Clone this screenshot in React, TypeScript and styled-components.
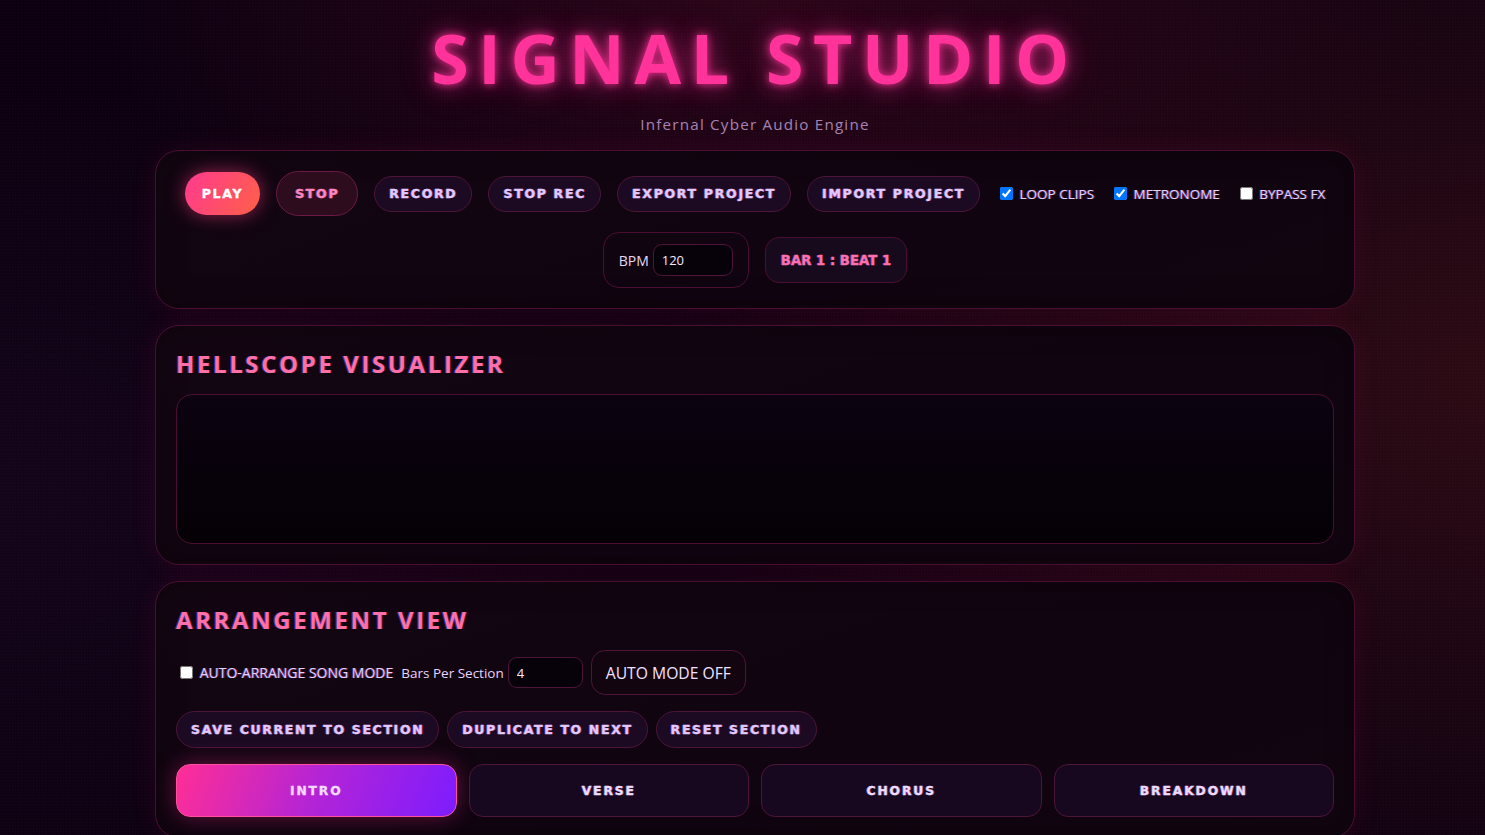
import React from "react";
import styled, { createGlobalStyle, css } from "styled-components";

const GlobalStyle = createGlobalStyle`
  html, body {
    margin: 0;
    padding: 0;
  }
  body {
    min-height: 100vh;
    background-color: #0c0010;
    background-image:
      repeating-linear-gradient(0deg, rgba(255,255,255,0.006) 0 1px, transparent 1px 3px),
      repeating-linear-gradient(90deg, rgba(255,255,255,0.006) 0 1px, transparent 1px 3px),
      radial-gradient(ellipse 45% 40% at 52% 0%, #2c0519 0%, rgba(44,5,25,0) 100%),
      radial-gradient(ellipse 55% 70% at 100% 45%, #2c0a14 0%, rgba(44,10,20,0) 100%),
      radial-gradient(ellipse 40% 50% at 0% 60%, #14041a 0%, rgba(20,4,26,0) 100%);
    background-attachment: fixed;
    font-family: "Open Sans", "Noto Sans", sans-serif;
    color: #e8d6f5;
  }
`;

const Page = styled.div`
  padding: 0 0 40px 25px;
`;

const Shell = styled.div`
  max-width: 1200px;
  margin: 0 auto;
  display: flex;
  flex-direction: column;
  gap: 16px;
`;

const Header = styled.header`
  text-align: center;
  padding-top: 20px;
`;

const Title = styled.h1`
  margin: 0;
  font-family: "Open Sans", sans-serif;
  font-weight: 700;
  font-size: 68px;
  line-height: 76px;
  letter-spacing: 9.6px;
  color: #ff3399;
  text-shadow: 0 0 8px rgba(255, 51, 153, 0.9), 0 0 22px rgba(255, 51, 153, 0.55),
    0 0 40px rgba(255, 51, 153, 0.3);
`;

const Subtitle = styled.p`
  margin: 18px 0 0;
  font-size: 15.2px;
  letter-spacing: 1.2px;
  color: #a683b3;
`;

const Panel = styled.section`
  border: 1px solid #4a0f30;
  border-radius: 24px;
  background: linear-gradient(160deg, #130612 0%, #0f040f 60%, #110510 100%);
  box-shadow: 0 0 28px rgba(255, 30, 110, 0.09), inset 0 0 30px rgba(0, 0, 0, 0.25);
  padding: 20px;
`;

const ToolbarPanel = styled(Panel)`
  padding: 20px 25px 20px;
`;

const Toolbar = styled.div`
  display: flex;
  flex-wrap: wrap;
  justify-content: center;
  align-items: center;
  gap: 16px;
`;

const heavy = css`
  font-family: "DejaVu Sans", "Liberation Sans", sans-serif;
  font-weight: 700;
  text-transform: uppercase;
  -webkit-text-stroke: 0.35px currentColor;
`;

const chroma = css`
  text-shadow: -1px 0 rgba(80, 110, 255, 0.55), 1px 0 rgba(255, 60, 120, 0.45);
`;

type Tone = "play" | "stop" | "plain";

const PillButton = styled.button<{ $tone?: Tone }>`
  ${heavy}
  font-size: 12.5px;
  letter-spacing: 1.7px;
  border-radius: 999px;
  cursor: pointer;
  padding: 0 14px;
  height: 36px;
  border: 1px solid #4d1538;
  background: #1b0a22;
  color: #e3c9ff;
  ${chroma}
  ${(p) =>
    p.$tone === "play" &&
    css`
      height: 43px;
      padding: 0 17px;
      border: none;
      color: #fff;
      background: linear-gradient(120deg, #ff3a8f 0%, #ff6048 100%);
      box-shadow: 0 0 18px rgba(255, 60, 130, 0.55);
      text-shadow: none;
    `}
  ${(p) =>
    p.$tone === "stop" &&
    css`
      height: 45px;
      padding: 0 18px;
      background: #2c0c1d;
      border-color: #6a1a43;
      color: #ff86bd;
    `}
`;

const Check = styled.label<{ $size?: number }>`
  font-size: ${(p) => p.$size ?? 13.5}px;
  color: #e8d4ff;
  display: inline-flex;
  align-items: center;
  white-space: pre;
  text-transform: uppercase;
  ${chroma}
  input {
    margin: 3px 3px 3px 4px;
  }
`;

const BpmBox = styled.div`
  display: flex;
  align-items: center;
  gap: 4px;
  padding: 11px 15px;
  border: 1px solid #4a0f30;
  border-radius: 16px;
  font-size: 14px;
  color: #e8d8f5;
`;

const NumInput = styled.input<{ $w: number; $h?: number }>`
  width: ${(p) => p.$w}px;
  height: ${(p) => p.$h ?? 32}px;
  box-sizing: border-box;
  padding: 0 8px;
  border: 1px solid #4d1538;
  border-radius: 9px;
  background: #07020a;
  color: #f4e8ff;
  font-family: "Open Sans", sans-serif;
  font-size: 13px;
  outline: none;
`;

const Readout = styled.div`
  ${heavy}
  font-size: 13.3px;
  letter-spacing: 0px;
  color: #ff70ad;
  padding: 0 15px;
  height: 44px;
  display: flex;
  align-items: center;
  border: 1px solid #4a0f30;
  border-radius: 14px;
  background: #180a1d;
  text-shadow: -1px 0 rgba(80, 110, 255, 0.5);
`;

const SectionTitle = styled.h2`
  margin: 0 0 12px;
  font-family: "Open Sans", sans-serif;
  font-weight: 700;
  font-size: 24px;
  line-height: 36px;
  letter-spacing: 2.6px;
  color: #ff6fa8;
  text-shadow: -1px 0 rgba(70, 90, 255, 0.6), 1px 0 rgba(255, 40, 120, 0.3);
`;

const Scope = styled.div`
  height: 148px;
  border: 1px solid #4a0f30;
  border-radius: 16px;
  background: linear-gradient(180deg, #0b0310 0%, #050006 100%);
`;

const Row = styled.div<{ $gap: number }>`
  display: flex;
  flex-wrap: wrap;
  align-items: center;
  gap: ${(p) => p.$gap}px;
  margin-bottom: 16px;
`;

const PlainLabel = styled.label`
  display: inline-flex;
  align-items: center;
  gap: 4px;
  font-size: 13.5px;
  color: #e8d4ff;
`;

const GhostButton = styled.button`
  font-family: "Open Sans", sans-serif;
  font-size: 15.7px;
  color: #f0e2ff;
  background: #12050f;
  border: 1px solid #4d1538;
  border-radius: 14px;
  height: 45px;
  padding: 0 14px;
  cursor: pointer;
`;

const ActionButton = styled(PillButton)`
  height: 37px;
  font-size: 12.5px;
  letter-spacing: 1.65px;
`;

const Tabs = styled.div`
  display: grid;
  grid-template-columns: repeat(4, 1fr);
  gap: 12px;
`;

const Tab = styled.button<{ $active?: boolean }>`
  ${heavy}
  font-size: 12.3px;
  letter-spacing: 1.9px;
  height: 53px;
  border-radius: 14px;
  border: 1px solid #4d1538;
  background: #170820;
  color: #eedcff;
  cursor: pointer;
  ${chroma}
  ${(p) =>
    p.$active &&
    css`
      border-color: #ff4fa0;
      background: linear-gradient(110deg, #ff2e96 0%, #b324d6 50%, #7d1cff 100%);
      box-shadow: 0 0 22px rgba(255, 46, 150, 0.35);
      color: #f3dcff;
      text-shadow: none;
    `}
`;

export default function App() {
  return (
    <>
      <GlobalStyle />
      <Page>
        <Shell>
          <Header>
            <Title>SIGNAL STUDIO</Title>
            <Subtitle>Infernal Cyber Audio Engine</Subtitle>
          </Header>

          <ToolbarPanel>
            <Toolbar>
              <PillButton $tone="play">Play</PillButton>
              <PillButton $tone="stop">Stop</PillButton>
              <PillButton>Record</PillButton>
              <PillButton>Stop Rec</PillButton>
              <PillButton>Export Project</PillButton>
              <PillButton>Import Project</PillButton>
              <Check>
                <input type="checkbox" defaultChecked /> Loop Clips
              </Check>
              <Check>
                <input type="checkbox" defaultChecked /> Metronome
              </Check>
              <Check>
                <input type="checkbox" /> Bypass FX
              </Check>
              <BpmBox>
                BPM
                <NumInput $w={80} type="number" defaultValue={120} />
              </BpmBox>
              <Readout>Bar 1 : Beat 1</Readout>
            </Toolbar>
          </ToolbarPanel>

          <Panel>
            <SectionTitle>HELLSCOPE VISUALIZER</SectionTitle>
            <Scope />
          </Panel>

          <Panel>
            <SectionTitle>ARRANGEMENT VIEW</SectionTitle>
            <Row $gap={8}>
              <Check $size={14}>
                <input type="checkbox" /> AUTO-ARRANGE SONG MODE
              </Check>
              <PlainLabel>
                Bars Per Section
                <NumInput $w={75} $h={31} type="number" defaultValue={4} />
              </PlainLabel>
              <GhostButton>AUTO MODE OFF</GhostButton>
            </Row>
            <Row $gap={8}>
              <ActionButton>Save Current To Section</ActionButton>
              <ActionButton>Duplicate To Next</ActionButton>
              <ActionButton>Reset Section</ActionButton>
            </Row>
            <Tabs>
              <Tab $active>Intro</Tab>
              <Tab>Verse</Tab>
              <Tab>Chorus</Tab>
              <Tab>Breakdown</Tab>
            </Tabs>
          </Panel>
        </Shell>
      </Page>
    </>
  );
}
